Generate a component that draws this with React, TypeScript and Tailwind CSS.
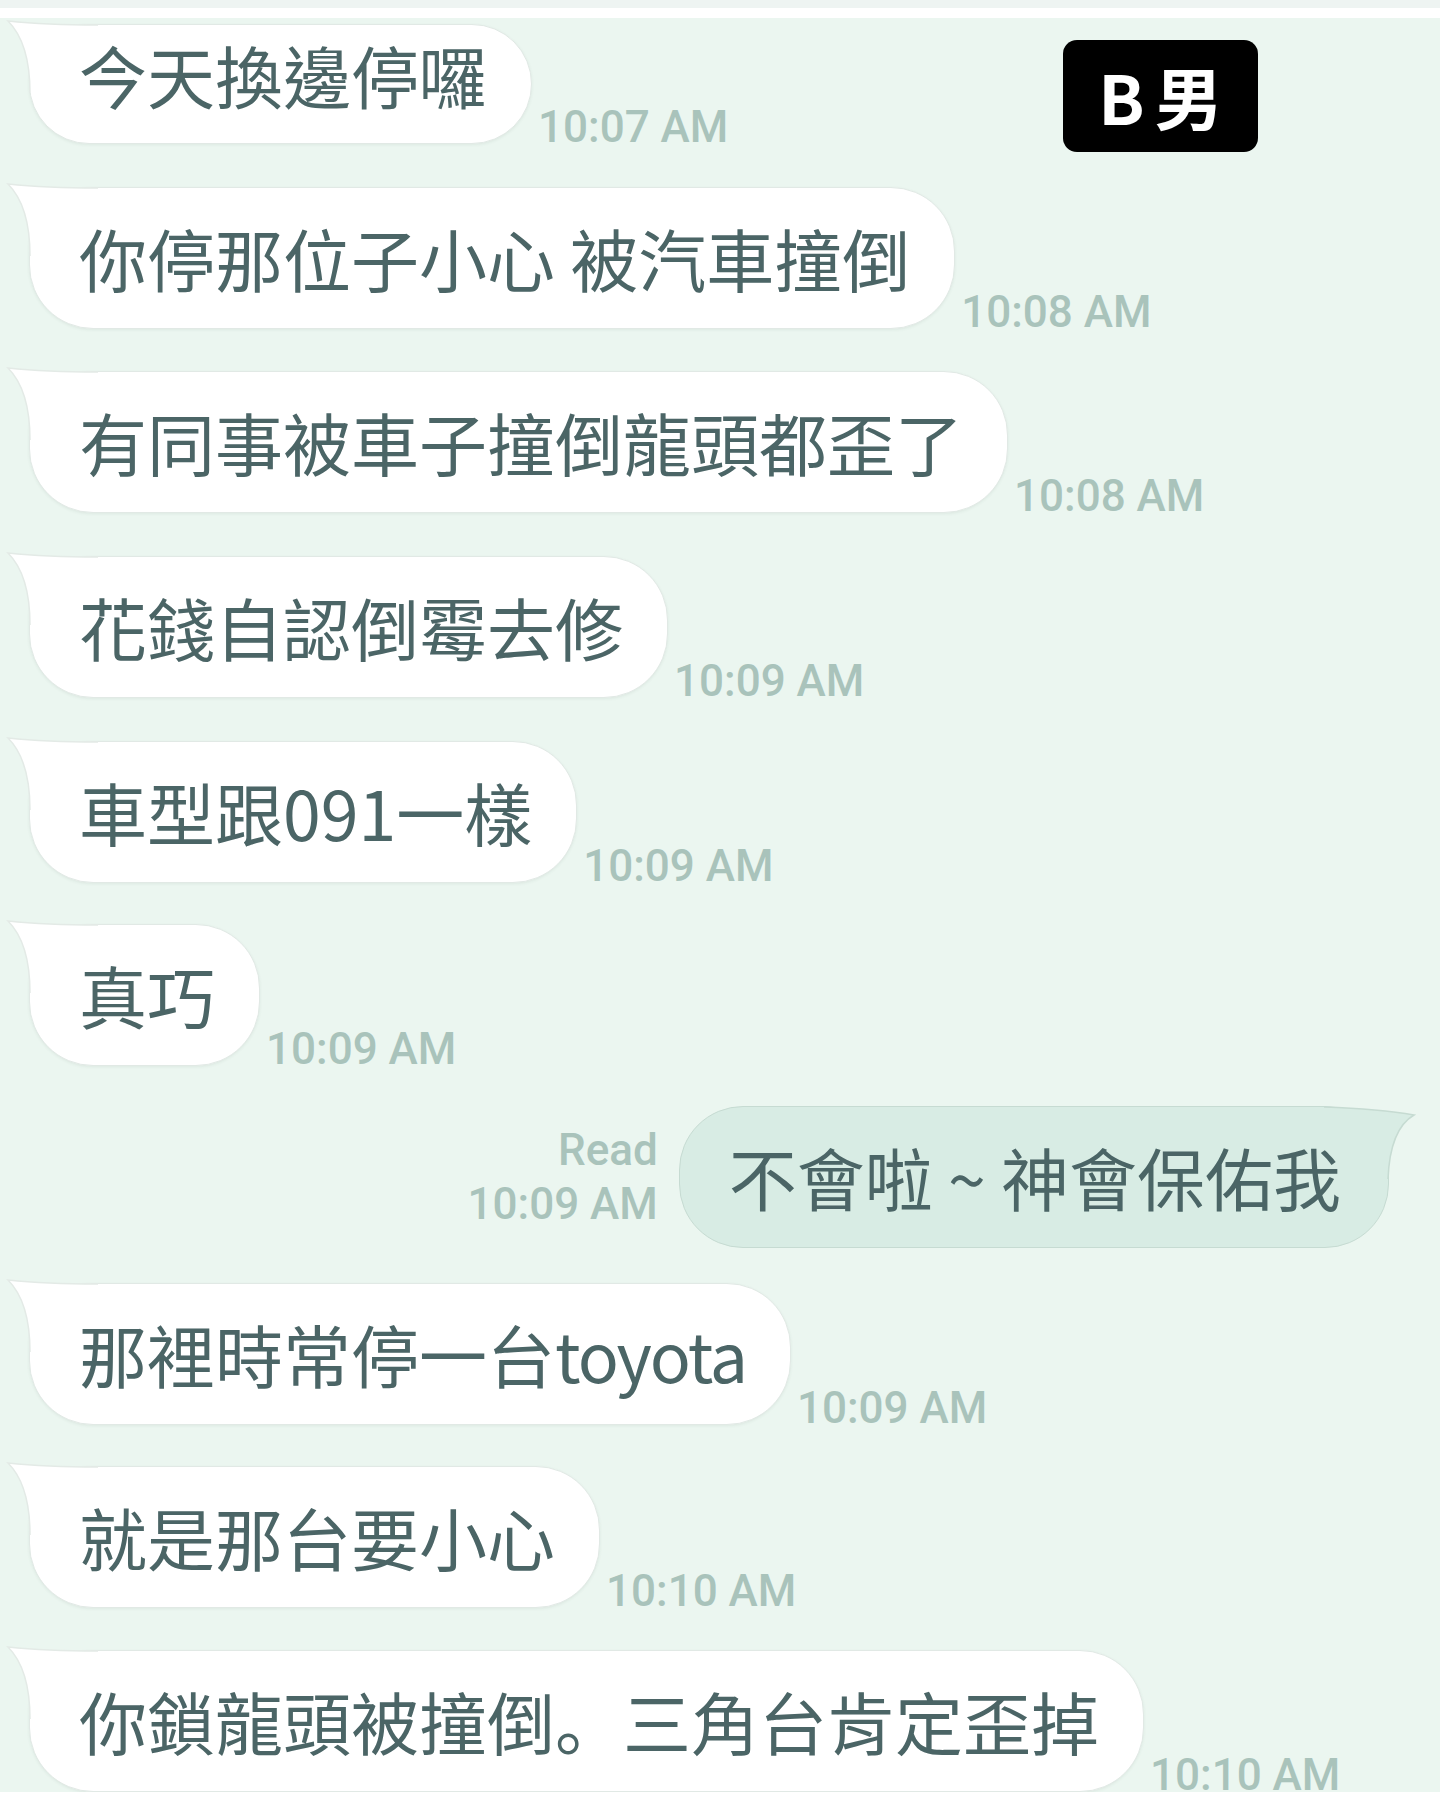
import type { ReactNode } from "react";

const cjk = "font-['Noto_Sans_CJK_TC','Noto_Sans',sans-serif]";
const num = "font-['Roboto','Liberation_Sans',sans-serif]";

type Msg = { text: ReactNode; time: string; mt: string; first?: boolean };

const before: Msg[] = [
  { text: "今天換邊停囉", time: "10:07 AM", mt: "mt-0", first: true },
  { text: "你停那位子小心 被汽車撞倒", time: "10:08 AM", mt: "mt-[43px]" },
  { text: "有同事被車子撞倒龍頭都歪了", time: "10:08 AM", mt: "mt-[42px]" },
  { text: "花錢自認倒霉去修", time: "10:09 AM", mt: "mt-[43px]" },
  { text: "車型跟091一樣", time: "10:09 AM", mt: "mt-[43px]" },
  { text: "真巧", time: "10:09 AM", mt: "mt-[41px]" },
];

const after: Msg[] = [
  {
    text: (
      <>
        那裡時常停一台<span className="tracking-[-2px]">toyota</span>
      </>
    ),
    time: "10:09 AM",
    mt: "mt-[35px]",
  },
  { text: "就是那台要小心", time: "10:10 AM", mt: "mt-[41px]" },
  {
    text: (
      <>
        你鎖龍頭被撞倒<span className="font-['Noto_Sans_CJK_SC',sans-serif]">。</span>三角台肯定歪掉
      </>
    ),
    time: "10:10 AM",
    mt: "mt-[42px]",
  },
];

const LeftTail = () => (
  <svg className="absolute left-[-24px] top-[-6px]" width="92" height="80" viewBox="0 0 92 80">
    <path d="M92 6 Q40 6 2 2 Q24 24 24 74 L92 74 Z" fill="#ffffff" />
    <path d="M92 6 Q40 6 2 2 Q24 24 24 74" fill="none" stroke="#e3eae6" strokeWidth="1.5" />
  </svg>
);

const RightTail = () => (
  <svg className="absolute right-[-28px] top-[-2px]" width="92" height="80" viewBox="0 0 92 80">
    <path d="M0 2 Q56 4 90 10 Q66 24 64 74 L0 74 Z" fill="#d8ece4" />
    <path d="M0 2 Q56 4 90 10 Q66 24 64 74" fill="none" stroke="#c6dbd2" strokeWidth="1.5" />
  </svg>
);

const Row = ({ m }: { m: Msg }) => (
  <div className={`flex items-end gap-[6px] ${m.mt}`}>
    <div
      className={`relative rounded-[64px] border border-[#e1e9e5] bg-white pl-[49px] pr-[44px] shadow-[0_1px_3px_rgba(60,90,80,0.08)] ${
        m.first ? "pt-[9px] pb-[27px]" : "py-[29px]"
      }`}
    >
      <LeftTail />
      <p className={`relative whitespace-nowrap text-[68px] leading-[82px] text-[#4b6566] ${cjk}`}>{m.text}</p>
    </div>
    <span className={`-mb-[5px] whitespace-nowrap text-[44px] font-medium leading-none text-[#a9c3bb] ${num}`}>
      {m.time}
    </span>
  </div>
);

export default function App() {
  return (
    <div className="relative h-[1800px] w-[1440px] overflow-hidden bg-[#ebf6f0]">
      <div className="h-[8px] bg-[#eef4f2]" />
      <div className="h-[10px] bg-white" />

      <div className="flex flex-col pl-[29px] pt-[6px]">
        {before.map((m, i) => (
          <Row key={i} m={m} />
        ))}

        <div className="mt-[40px] flex items-center justify-end gap-[21px] pr-[51px]">
          <div className={`flex flex-col items-end text-[44px] font-medium leading-[54px] text-[#a9c3bb] ${num}`}>
            <span>Read</span>
            <span>10:09 AM</span>
          </div>
          <div className="relative rounded-[64px] border border-[#c6dbd2] bg-[#d8ece4] py-[29px] pl-[49px] pr-[47px]">
            <RightTail />
            <p className={`relative whitespace-nowrap text-[68px] leading-[82px] text-[#4b6566] ${cjk}`}>
              不會啦 ~ 神會保佑我
            </p>
          </div>
        </div>

        {after.map((m, i) => (
          <Row key={i} m={m} />
        ))}
      </div>

      <div className="absolute bottom-0 left-0 h-[8px] w-full bg-white" />

      <div className="absolute left-[1063px] top-[40px] flex h-[112px] w-[195px] items-center justify-center gap-[10px] rounded-[14px] bg-black">
        <span className={`text-[68px] font-bold leading-none text-white ${cjk}`}>B</span>
        <span className={`text-[68px] font-bold leading-none text-white ${cjk}`}>男</span>
      </div>
    </div>
  );
}
